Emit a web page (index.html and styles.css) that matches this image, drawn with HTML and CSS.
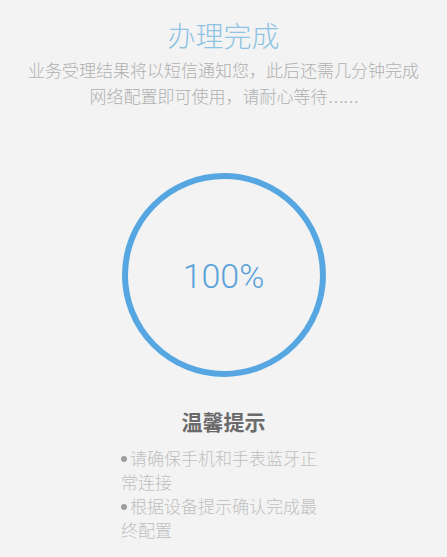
FILE: index.html
```html
<!DOCTYPE html>
<html lang="zh">
<head>
<meta charset="utf-8">
<title>办理完成</title>
<link rel="stylesheet" href="styles.css">
</head>
<body>
<div class="page">
  <h1 class="title">办理完成</h1>
  <p class="subtitle">业务受理结果将以短信通知您，此后还需几分钟完成<br>网络配置即可使用，请耐心等待<span class="dots">……</span></p>
  <div class="ring"><span class="percent">100%</span></div>
  <h2 class="tips-title">温馨提示</h2>
  <ul class="tips">
    <li>请确保手机和手表蓝牙正常连接</li>
    <li>根据设备提示确认完成最终配置</li>
  </ul>
</div>
</body>
</html>
```
FILE: styles.css
```css
html, body {
  margin: 0;
  padding: 0;
  background: #f3f3f3;
}
body {
  width: 447px;
  height: 557px;
  overflow: hidden;
  font-family: "Noto Sans CJK SC", "Noto Sans", sans-serif;
}
.page {
  display: flex;
  flex-direction: column;
  align-items: center;
}
.title {
  margin: 17px 0 0;
  font-size: 28px;
  line-height: 36px;
  font-weight: 300;
  color: #8ec3e3;
}
.subtitle {
  margin: 4px 0 0;
  font-size: 17px;
  line-height: 26px;
  font-weight: 300;
  color: #b0b0b0;
  text-align: center;
}
.dots {
  font-family: "Liberation Sans", sans-serif;
  letter-spacing: -2px;
}
.ring {
  margin-top: 62px;
  width: 204px;
  height: 204px;
  box-sizing: border-box;
  border: 6px solid #56a6e2;
  border-radius: 50%;
  display: flex;
  align-items: center;
  justify-content: center;
}
.percent {
  font-family: Roboto, "Liberation Sans", sans-serif;
  font-weight: 300;
  font-size: 34px;
  color: #5aa2da;
  margin-top: 2px;
}
.tips-title {
  margin: 30px 0 0;
  font-size: 21px;
  line-height: 28px;
  font-weight: 700;
  color: #6a6a6a;
}
.tips {
  list-style: none;
  margin: 11px 0 0;
  padding: 0;
  width: 205px;
  font-size: 17px;
  line-height: 24px;
  font-weight: 300;
  color: #c0c0c0;
}
.tips li::before {
  content: "";
  display: inline-block;
  width: 6px;
  height: 6px;
  border-radius: 50%;
  background: #9d9d9d;
  margin: 0 3px 0 0;
  vertical-align: 3px;
}
```
